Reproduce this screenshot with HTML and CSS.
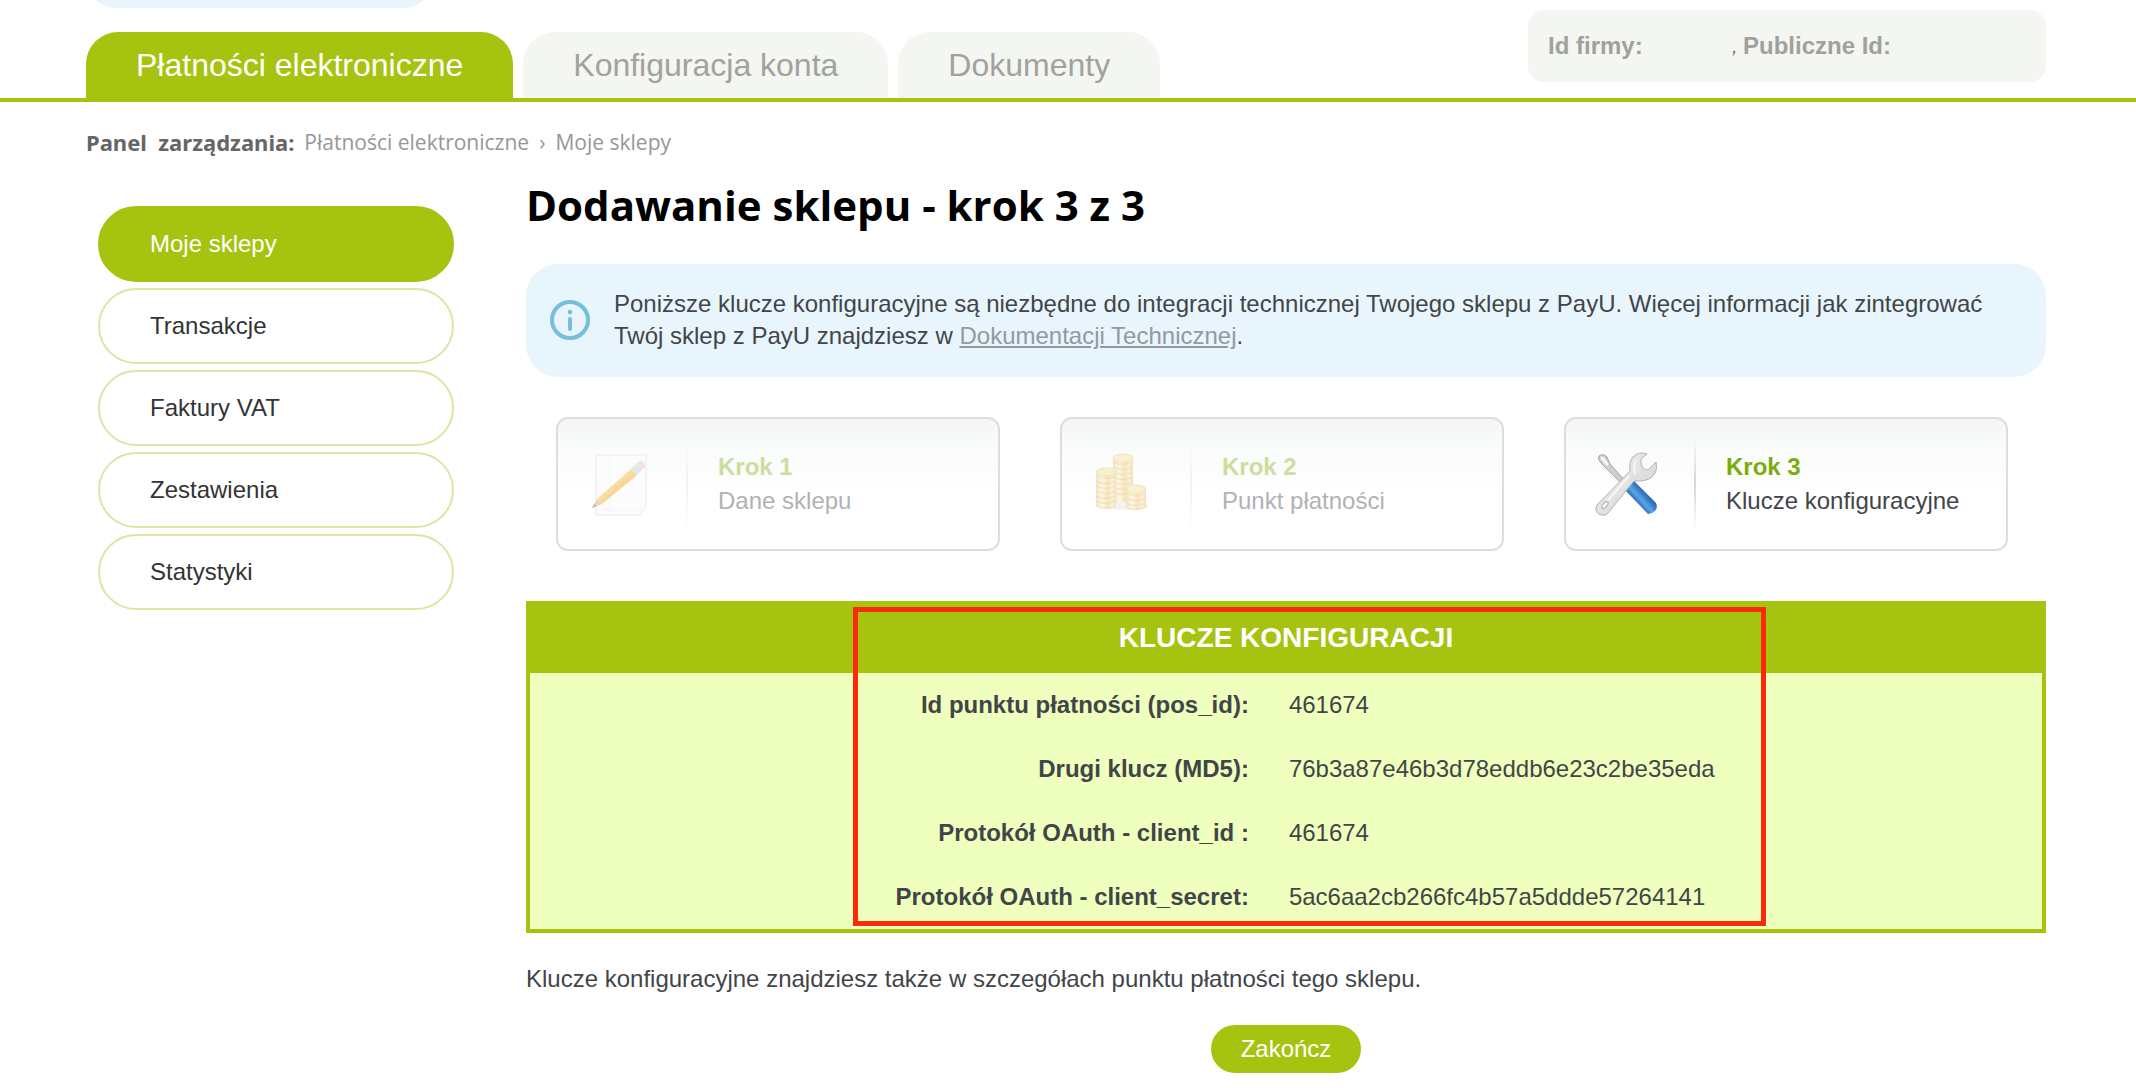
FILE: index.html
```html
<!DOCTYPE html>
<html lang="pl">
<head>
<meta charset="utf-8">
<title>Dodawanie sklepu - krok 3 z 3</title>
<link rel="stylesheet" href="styles.css">
</head>
<body>
<header class="header">
  <div class="header-left">
    <div class="notice-clip"><div class="notice-tail"></div></div>
    <nav class="tabs">
      <a class="tab tab-active" href="#">Płatności elektroniczne</a>
      <a class="tab" href="#">Konfiguracja konta</a>
      <a class="tab" href="#">Dokumenty</a>
    </nav>
  </div>
  <div class="company"><b class="company-id">Id firmy:</b><span class="comma">,</span><b>Publiczne Id:</b></div>
</header>

<nav class="breadcrumb">
  <b>Panel&nbsp; zarządzania:</b>
  <a href="#">Płatności elektroniczne</a>
  <span class="sep">›</span>
  <a href="#">Moje sklepy</a>
</nav>

<div class="layout">
  <nav class="side">
    <a class="side-link side-active" href="#">Moje sklepy</a>
    <a class="side-link" href="#">Transakcje</a>
    <a class="side-link" href="#">Faktury VAT</a>
    <a class="side-link" href="#">Zestawienia</a>
    <a class="side-link" href="#">Statystyki</a>
  </nav>

  <main class="main">
    <h1 class="title">Dodawanie sklepu - krok 3 z 3</h1>

    <div class="info">
      <svg class="info-icon" viewBox="0 0 40 40" aria-hidden="true">
        <circle cx="20" cy="20" r="18" fill="none" stroke="#75bfdb" stroke-width="4"/>
        <circle cx="20" cy="12" r="2.3" fill="#75bfdb"/>
        <path d="M20 19v10" stroke="#75bfdb" stroke-width="4" stroke-linecap="round"/>
      </svg>
      <p class="info-text">Poniższe klucze konfiguracyjne są niezbędne do integracji technicznej Twojego sklepu z PayU. Więcej informacji jak zintegrować Twój sklep z PayU znajdziesz w <a href="#">Dokumentacji Technicznej</a>.</p>
    </div>

    <ol class="steps">
      <li class="step step-done">
        <span class="step-icon">
          <svg viewBox="-3 0 64 64" aria-hidden="true">
            <defs>
              <linearGradient id="pencil" x1="0" y1="0" x2="1" y2="1">
                <stop offset="0.3" stop-color="#fbe9b8"/><stop offset="0.7" stop-color="#f6c987"/>
              </linearGradient>
            </defs>
            <path d="M6 3h50v52l-6 8H6z" fill="#fcfcfc" stroke="#f3f3f3" stroke-width="2"/>
            <path d="M20 4v58M6 58h46M56 53l-6 2v8" fill="none" stroke="#f5f5f5"/>
            <path d="M2 56l5-9 5 5z" fill="#ecd2c0"/>
            <path d="M7 47L41 17l6 6-35 29z" fill="url(#pencil)"/>
            <path d="M41 17l5-5 6 6-5 5z" fill="#e2e5ea"/>
            <path d="M46 12l4-3q5 1 5 6l-3 3z" fill="#f5e0e4"/>
            <path d="M2 56l2-4 3 2z" fill="#c9b4ae"/>
          </svg>
        </span>
        <span class="step-text"><b>Krok 1</b><span>Dane sklepu</span></span>
      </li>
      <li class="step step-done">
        <span class="step-icon">
          <svg viewBox="0 0 64 64" aria-hidden="true">
            <defs>
              <linearGradient id="coin" x1="0" x2="1">
                <stop offset="0" stop-color="#f5e4bf"/><stop offset="0.3" stop-color="#fdf8e2"/><stop offset="0.6" stop-color="#f6e3bf"/><stop offset="0.8" stop-color="#fbf3d8"/><stop offset="1" stop-color="#f3e2c2"/>
              </linearGradient>
            </defs>
            <ellipse cx="34" cy="54" rx="24" ry="4" fill="#f3f3f1"/>
            <path d="M22 6v42q10 5 20 0V6z" fill="url(#coin)"/>
            <path d="M22 10q10 5 20 0M22 15q10 5 20 0M22 20q10 5 20 0M22 25q10 5 20 0M22 30q10 5 20 0M22 35q10 5 20 0M22 40q10 5 20 0" fill="none" stroke="#efddb6"/>
            <ellipse cx="32" cy="6" rx="10" ry="4" fill="#f9f1d2" stroke="#f2e3bf"/>
            <path d="M5 20v34q10 5 20 0V20z" fill="url(#coin)"/>
            <path d="M5 24q10 5 20 0M5 29q10 5 20 0M5 34q10 5 20 0M5 39q10 5 20 0M5 44q10 5 20 0M5 49q10 5 20 0M5 54q10 5 20 0" fill="none" stroke="#efddb6"/>
            <ellipse cx="15" cy="20" rx="10" ry="4" fill="#f5f1cc" stroke="#f0e6bc"/>
            <path d="M35 37v18q10 5 20 0V37z" fill="url(#coin)"/>
            <path d="M35 41q10 5 20 0M35 46q10 5 20 0M35 51q10 5 20 0M35 55q10 5 20 0" fill="none" stroke="#efddb6"/>
            <ellipse cx="45" cy="37" rx="10" ry="4" fill="#f9f1d2" stroke="#f2e3bf"/>
          </svg>
        </span>
        <span class="step-text"><b>Krok 2</b><span>Punkt płatności</span></span>
      </li>
      <li class="step">
        <span class="step-icon">
          <svg viewBox="0 0 64 64" aria-hidden="true">
            <defs>
              <linearGradient id="handle" gradientUnits="userSpaceOnUse" x1="40" y1="51" x2="51" y2="41">
                <stop offset="0" stop-color="#1f5fa8"/><stop offset="0.45" stop-color="#5aa5e6"/><stop offset="1" stop-color="#2367b2"/>
              </linearGradient>
              <linearGradient id="steel" x1="0" y1="0" x2="1" y2="1">
                <stop offset="0" stop-color="#f4f4f4"/><stop offset="0.5" stop-color="#e2e2e2"/><stop offset="1" stop-color="#cacaca"/>
              </linearGradient>
            </defs>
            <path d="M4 4q4-3 8 1l3 7 16 18-3 3L11 16 6 11q-4-4-2-7z" fill="#cfcfcf" stroke="#a3a3a3" stroke-width="1"/>
            <path d="M7 6l5 6" stroke="#fafafa" stroke-width="3" stroke-linecap="round"/>
            <path d="M30 38l9-9 22 22q2 5-1 8-3 3-7 3z" fill="url(#handle)"/>
            <path d="M52 2Q44-1 38 5q-4 4-3 14L2 53q-3 6 2 9 5 3 9-1l26-32q12 1 18-4 6-5 4-15l-8 8q-6 0-7-7-1-5 6-9z" fill="url(#steel)" stroke="#b2b2b2" stroke-width="1"/>
            <path d="M41 8q-3 5-1 14M34 24L9 53" fill="none" stroke="#f6f6f6" stroke-width="2"/>
            <ellipse cx="10" cy="53" rx="2" ry="4" transform="rotate(40 10 53)" fill="#f8f8f8" stroke="#a8a8a8"/>
          </svg>
        </span>
        <span class="step-text"><b>Krok 3</b><span>Klucze konfiguracyjne</span></span>
      </li>
    </ol>

    <div class="keys-wrap">
      <table class="keys">
        <thead><tr><th class="keys-title" colspan="2">KLUCZE KONFIGURACJI</th></tr></thead>
        <tbody>
          <tr><th scope="row">Id punktu płatności (pos_id):</th><td>461674</td></tr>
          <tr><th scope="row">Drugi klucz (MD5):</th><td>76b3a87e46b3d78eddb6e23c2be35eda</td></tr>
          <tr><th scope="row">Protokół OAuth - client_id :</th><td>461674</td></tr>
          <tr><th scope="row">Protokół OAuth - client_secret:</th><td>5ac6aa2cb266fc4b57a5ddde57264141</td></tr>
        </tbody>
      </table>
      <div class="highlight"></div>
    </div>

    <p class="note">Klucze konfiguracyjne znajdziesz także w szczegółach punktu płatności tego sklepu.</p>
    <button class="finish" type="button">Zakończ</button>
  </main>
</div>
</body>
</html>
```
FILE: styles.css
```css
* { box-sizing: border-box; }

body {
  margin: 0;
  background: #fff;
  color: #424548;
  font: 24px/32px "Liberation Sans", Arial, sans-serif;
}

a { text-decoration: none; }

.header {
  display: flex;
  justify-content: space-between;
  align-items: flex-start;
  padding: 0 90px 0 86px;
  border-bottom: 4px solid #a6c40f;
}

.notice-clip {
  display: flex;
  align-items: flex-end;
  height: 8px;
  padding-left: 2px;
  overflow: hidden;
}
.notice-tail {
  flex: none;
  width: 344px;
  height: 64px;
  border-radius: 28px;
  background: #e8f5fc;
}

.tabs { display: flex; gap: 10px; padding-top: 24px; }
.tab {
  padding: 0 50px;
  border-radius: 32px 32px 0 0;
  background: #f4f6f1;
  color: #a1a29e;
  font-size: 32px;
  line-height: 66px;
}
.tab-active { background: #a6c40f; color: #fff; }

.company {
  display: flex;
  width: 518px;
  margin-top: 10px;
  padding: 20px;
  border-radius: 16px;
  background: #f4f6f1;
  color: #a0a19d;
}
.company-id { flex: 0 0 184px; }
.comma { flex: 0 0 11px; color: #777; font-size: 20px; font-style: italic; }

.breadcrumb {
  display: flex;
  gap: 10px;
  padding: 24px 86px 0;
  color: #666;
  font: 22px/32px "Noto Sans", Tahoma, sans-serif;
}
.breadcrumb a, .sep {
  color: #96969a;
  font-family: "Open Sans", Tahoma, sans-serif;
  font-size: 21px;
}

.layout {
  display: flex;
  gap: 72px;
  padding: 21px 90px 0 98px;
}

.side {
  flex: 0 0 356px;
  display: flex;
  flex-direction: column;
  gap: 6px;
  padding-top: 27px;
}
.side-link {
  padding: 20px 50px;
  border: 2px solid #dbe6a3;
  border-radius: 38px;
  color: #333;
}
.side-active { background: #a6c40f; border-color: #a6c40f; color: #fff; }

.main { flex: 1; }

.title {
  margin: 0 0 33px;
  color: #000;
  font: bold 42px/52px "Open Sans", "Trebuchet MS", sans-serif;
}

.info {
  display: flex;
  align-items: center;
  gap: 24px;
  padding: 24px 60px 25px 24px;
  border-radius: 32px;
  background: #e8f5fc;
}
.info-icon { flex: none; width: 40px; height: 40px; }
.info-text { margin: 0; }
.info-text a { color: #93999f; text-decoration: underline; }

.steps {
  display: flex;
  gap: 60px;
  margin: 40px 38px 50px 30px;
  padding: 0;
  list-style: none;
}
.step {
  flex: 1;
  display: flex;
  align-items: center;
  height: 134px;
  border: 2px solid #dcdedd;
  border-radius: 12px;
  background: linear-gradient(#f4f6f5, #fafbfb 30px, #fff 76px);
}
.step-icon {
  display: flex;
  align-items: center;
  width: 130px;
  height: 92px;
  padding-left: 29px;
  border-right: 2px solid;
  border-image: linear-gradient(#fff0, #d4d6d5, #fff0) 1;
}
.step-icon svg { width: 64px; height: 64px; overflow: visible; }
.step-text { display: flex; flex-direction: column; gap: 2px; padding-left: 30px; }
.step-text b { color: #7aad0b; }
.step-done .step-icon { border-image: linear-gradient(#fff0, #f0f1f1, #fff0) 1; }
.step-done .step-text { color: #b1b2b3; }
.step-done .step-text b { color: #cade9d; }

.keys-wrap { position: relative; }
.keys {
  width: 100%;
  border: 4px solid #a6c40f;
  border-top: 0;
  border-spacing: 0;
  background: #eeffbe;
}
.keys th, .keys td { padding: 16px 18px; text-align: left; }
.keys tbody th { width: 49%; padding-right: 22px; text-align: right; }
.keys .keys-title {
  padding: 21px 20px 19px;
  background: #a6c40f;
  color: #fff;
  font-size: 28px;
  text-align: center;
}
.highlight {
  position: absolute;
  inset: 6px 280px 7px 327px;
  border: 5px solid #f92b08;
}

.note { margin: 30px 0; }
.finish {
  display: block;
  margin: 0 auto 14px;
  padding: 8px 30px;
  border: 0;
  border-radius: 24px;
  background: #a6c40f;
  color: #fff;
  font: inherit;
}
```
